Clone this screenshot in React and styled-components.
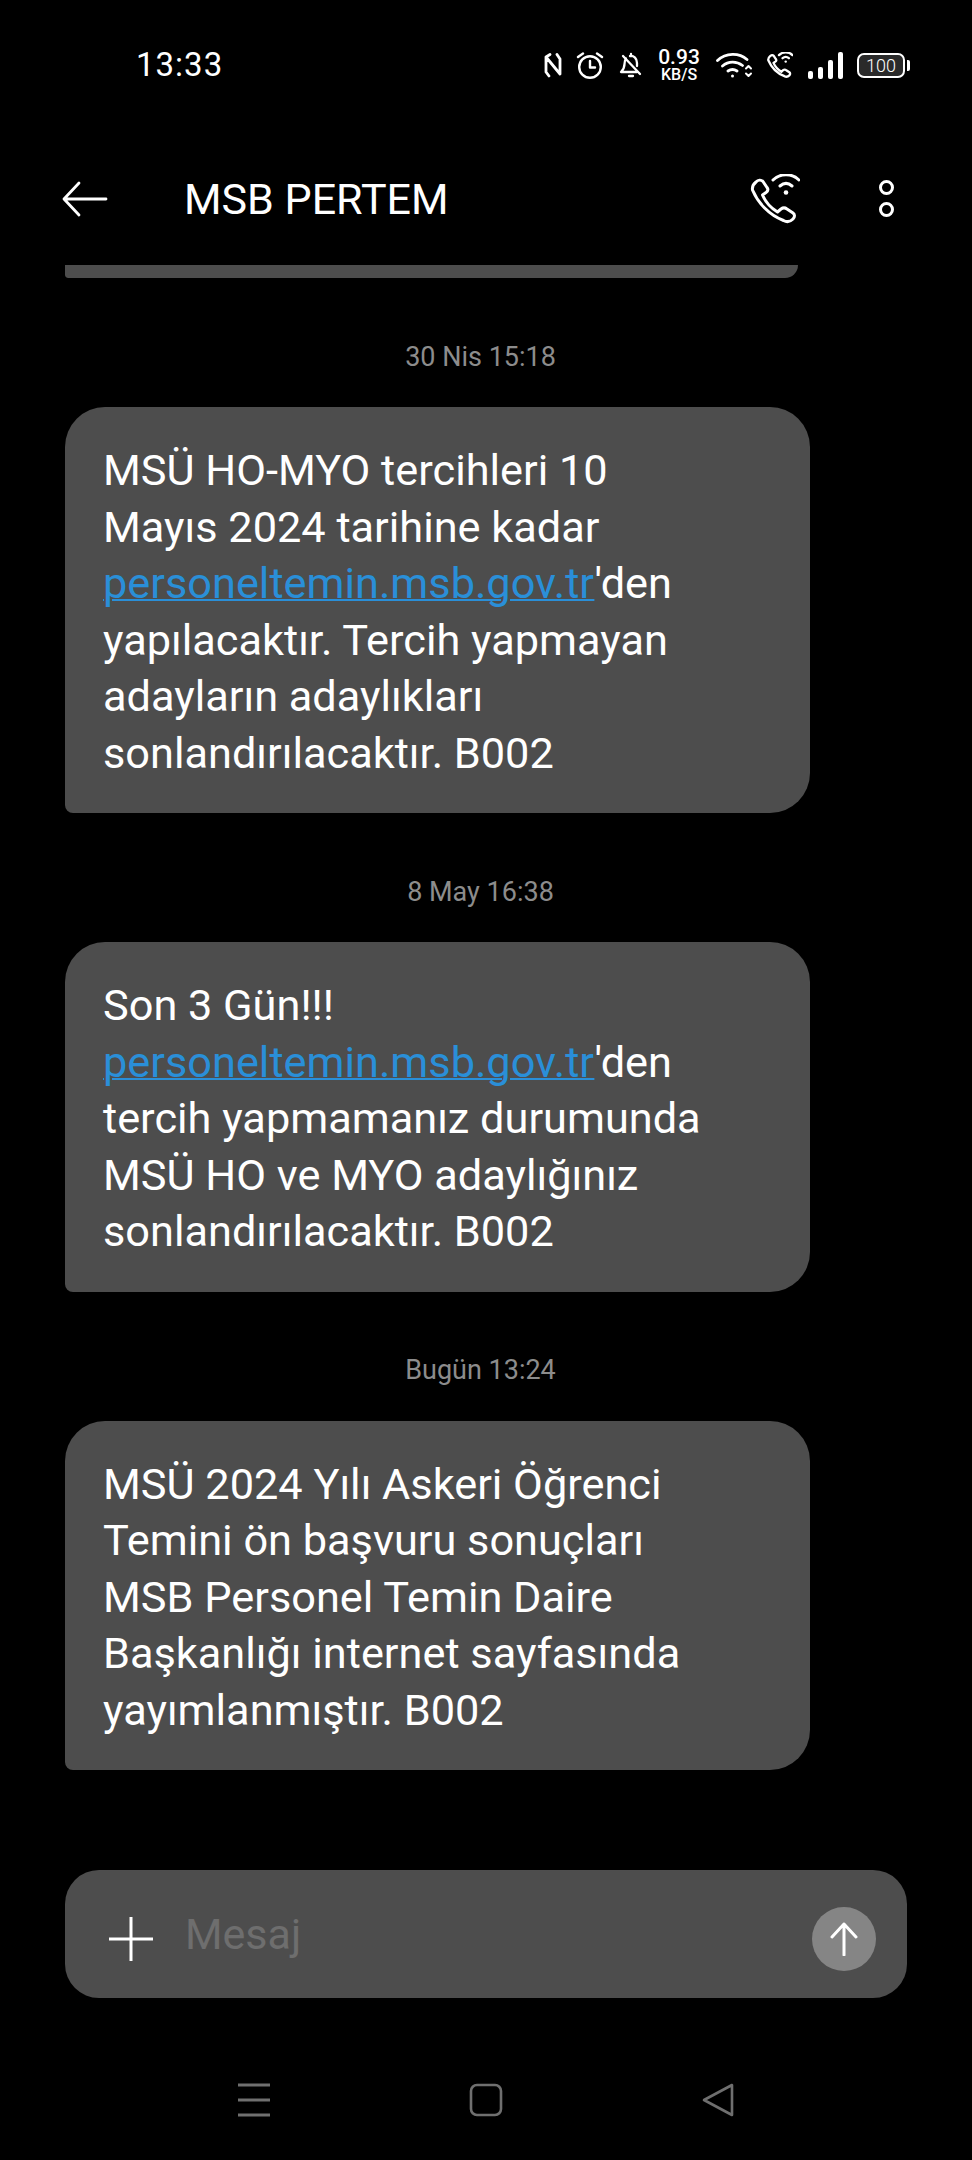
import styled, { createGlobalStyle } from "styled-components";

export default function App() {
    return (
        <>
            <GlobalStyle />
            <Screen>
                <StatusBar>
                    <Clock>13:33</Clock>
                    <StatusIcons>
                        <svg width="18" height="25" viewBox="0 0 18 25" fill="none" stroke="#fff" strokeWidth="2.8" strokeLinecap="round" strokeLinejoin="round">
                            <path d="M6 1.5 2 4v15l3 4M2 4l14 17M16 21V6l-3-4.500" />
                        </svg>
                        <svg width="28" height="27" viewBox="0 0 28 27" fill="none" stroke="#fff" strokeWidth="2.4" strokeLinecap="round" strokeLinejoin="round">
                            <circle cx="14" cy="15" r="10.8" />
                            <path d="M14 9v6.5h5M2 5l5-3.5M26 5l-5-3.5" />
                        </svg>
                        <svg width="24" height="27" viewBox="0 0 24 27" fill="none" stroke="#fff" strokeWidth="2.3" strokeLinecap="round" strokeLinejoin="round">
                            <path d="M12 2v2M7 6.5C5.8 8 5.500 10 5.500 12c0 4-1.500 6-3.500 8h16M11 4c4-.5 7 2.500 7 7v3M4 4l17 18M10 24h4" />
                        </svg>
                        <NetSpeed>
                            <SpeedValue>0.93</SpeedValue>
                            <SpeedUnit>KB/S</SpeedUnit>
                        </NetSpeed>
                        <svg width="37" height="26" viewBox="0 0 37 26" fill="none" stroke="#fff" strokeWidth="2.8" strokeLinecap="round" strokeLinejoin="round">
                            <path d="M1.5 8.5C10 .5 23 .5 31 7.5M6.5 14c6-5 14-5 20-.5M12 19c3-2 6-2 9 0" />
                            <circle cx="16.5" cy="24" r="1.5" fill="#fff" stroke="none" />
                            <path d="M30 16.500l2.500-2.500 2.500 2.500M30 21.500l2.500 2.500 2.500-2.500" strokeWidth="2" />
                        </svg>
                        <WifiCallIcon size={26} stroke={2.3} />
                        <SignalBars>
                            <SignalBar $height={8} />
                            <SignalBar $height={12} />
                            <SignalBar $height={19} />
                            <SignalBar $height={27} />
                        </SignalBars>
                        <Battery>
                            <BatteryBody>100</BatteryBody>
                            <BatteryCap />
                        </Battery>
                    </StatusIcons>
                </StatusBar>

                <Header>
                    <svg width="46" height="36" viewBox="0 0 46 36" fill="none" stroke="#fff" strokeWidth="2.8" strokeLinecap="round" strokeLinejoin="round">
                        <path d="M17 2 2 18l15 16M2 18h42" />
                    </svg>
                    <Title>MSB PERTEM</Title>
                    <HeaderActions>
                        <WifiCallIcon size={50} stroke={3} />
                        <MoreDots>
                            <Dot />
                            <Dot />
                        </MoreDots>
                    </HeaderActions>
                </Header>

                <Thread>
                    <ClippedBubble />
                    {messages.map((message) => (
                        <MessageGroup key={message.date}>
                            <DateLabel>{message.date}</DateLabel>
                            <Bubble>
                                {message.lines.map((line, i) => (
                                    <BubbleLine key={i}>{line}</BubbleLine>
                                ))}
                            </Bubble>
                        </MessageGroup>
                    ))}
                </Thread>

                <Composer>
                    <svg width="44" height="44" viewBox="0 0 44 44" fill="none" stroke="#fff" strokeWidth="3">
                        <path d="M22 0v44M0 22h44" />
                    </svg>
                    <Placeholder>Mesaj</Placeholder>
                    <SendButton>
                        <svg width="30" height="34" viewBox="0 0 30 34" fill="none" stroke="#fff" strokeWidth="3" strokeLinecap="round" strokeLinejoin="round">
                            <path d="M15 2v31M3 15 15 2l12 13" />
                        </svg>
                    </SendButton>
                </Composer>

                <NavBar>
                    <svg width="34" height="34" viewBox="0 0 34 34" fill="none" stroke="#6f6f6f" strokeWidth="3">
                        <path d="M1 2h32M1 17h32M1 32h32" />
                    </svg>
                    <svg width="34" height="34" viewBox="0 0 34 34" fill="none" stroke="#6f6f6f" strokeWidth="2.6">
                        <rect x="2" y="2" width="30" height="30" rx="6" />
                    </svg>
                    <svg width="34" height="34" viewBox="0 0 34 34" fill="none" stroke="#6f6f6f" strokeWidth="2.6" strokeLinejoin="round">
                        <path d="M31 2v30L3 17z" />
                    </svg>
                </NavBar>
            </Screen>
        </>
    );
}

function WifiCallIcon({ size, stroke }) {
    return (
        <svg width={size} height={size} viewBox="0 0 50 50" fill="none" stroke="#fff" strokeWidth={stroke * 50 / size} strokeLinecap="round" strokeLinejoin="round">
            <path d="M6 8c2-2 5-2.500 7-.5l4 6c1.500 2 1 3.500-1 5l-3.500 2.500c3 7 8.500 13 15 17l3.500-3c2-1.500 4-1.500 6 0l6 4c2 1.500 2 4 0 6-2.500 2.500-6 3.500-9.500 1.500C19 41 8 29 2.500 16 2 13 3.500 10 6 8z" />
            <path d="M23 6c7-7 19-7 26 0M30 12c4-3.500 8-3.500 12 0" />
            <circle cx="36" cy="18.5" r="2.3" fill="#fff" stroke="none" />
        </svg>
    );
}

const GlobalStyle = createGlobalStyle`
    html, body {
        margin: 0;
        padding: 0;
        background-color: #000000;
    }
    * {
        box-sizing: border-box;
    }
`
const Screen = styled.div`
    width: 972px;
    height: 2160px;
    background-color: #000000;
    color: #ffffff;
    font-family: Roboto, "Liberation Sans", sans-serif;
    display: flex;
    flex-direction: column;
    overflow: hidden;
`
const StatusBar = styled.div`
    height: 130px;
    flex-shrink: 0;
    display: flex;
    align-items: flex-start;
    justify-content: space-between;
    padding: 48px 62px 0 136px;
`
const Clock = styled.span`
    font-size: 33px;
    line-height: 34px;
    letter-spacing: 1px;
`
const StatusIcons = styled.div`
    display: flex;
    align-items: center;
    gap: 14.5px;
    height: 34px;
`
const NetSpeed = styled.div`
    display: flex;
    flex-direction: column;
    align-items: center;
    width: 44px;
    font-weight: 500;
`
const SpeedValue = styled.span`
    font-size: 21px;
    line-height: 19px;
`
const SpeedUnit = styled.span`
    font-size: 16px;
    line-height: 15px;
`
const SignalBars = styled.div`
    display: flex;
    align-items: flex-end;
    gap: 5px;
    height: 27px;
`
const SignalBar = styled.span`
    width: 5px;
    height: ${(props) => props.$height}px;
    background-color: #ffffff;
    border-radius: 2px;
`
const Battery = styled.div`
    display: flex;
    align-items: center;
    gap: 2px;
`
const BatteryBody = styled.div`
    width: 48px;
    height: 25px;
    border: 2px solid #ffffff;
    border-radius: 7px;
    background-color: #2a2a2a;
    display: flex;
    align-items: center;
    justify-content: center;
    font-size: 18px;
    font-weight: 300;
`
const BatteryCap = styled.span`
    width: 3px;
    height: 11px;
    background-color: #ffffff;
    border-radius: 0 2px 2px 0;
`
const Header = styled.div`
    height: 135px;
    flex-shrink: 0;
    display: flex;
    align-items: center;
    padding: 2px 78px 0 62px;
`
const Title = styled.h1`
    margin: 0 0 0 76px;
    font-size: 43px;
    font-weight: 400;
`
const HeaderActions = styled.div`
    margin-left: auto;
    display: flex;
    align-items: center;
    gap: 79px;
`
const MoreDots = styled.div`
    display: flex;
    flex-direction: column;
    gap: 7px;
`
const Dot = styled.span`
    width: 15px;
    height: 15px;
    border: 3px solid #ffffff;
    border-radius: 50%;
`
const Thread = styled.div`
    flex: 1;
    padding: 0 76px 0 65px;
    display: flex;
    flex-direction: column;
    overflow: hidden;
`
const ClippedBubble = styled.div`
    flex-shrink: 0;
    height: 13px;
    width: 733px;
    background-color: #4d4d4d;
    border-radius: 0 0 30px 8px;
`
const MessageGroup = styled.div`
    display: flex;
    flex-direction: column;
    flex-shrink: 0;
`
const DateLabel = styled.div`
    height: 129px;
    padding-top: 28px;
    display: flex;
    align-items: center;
    justify-content: center;
    font-size: 27px;
    color: #8c8c8c;
`
const Bubble = styled.div`
    width: 745px;
    padding: 36px 38px 31px;
    background-color: #4d4d4d;
    border-radius: 40px 40px 40px 8px;
    font-size: 43.3px;
    line-height: 56.5px;
`
const BubbleLine = styled.div`
    white-space: nowrap;
`
const SmsLink = styled.span`
    color: #2a8fd8;
    text-decoration: underline;
    text-decoration-thickness: 2px;
`
const Composer = styled.div`
    height: 128px;
    flex-shrink: 0;
    margin: 0 65px;
    padding: 9px 31px 0 44px;
    display: flex;
    align-items: center;
    background-color: #4d4d4d;
    border-radius: 34px;
`
const Placeholder = styled.span`
    margin: 0 0 9px 32px;
    font-size: 43px;
    color: #6e6e6e;
`
const SendButton = styled.div`
    width: 64px;
    height: 64px;
    margin-left: auto;
    border-radius: 50%;
    background-color: #858585;
    display: flex;
    align-items: center;
    justify-content: center;
`
const NavBar = styled.div`
    height: 162px;
    flex-shrink: 0;
    padding-top: 42px;
    display: flex;
    align-items: center;
    justify-content: center;
    gap: 198px;
`

const messages = [
    {
        date: "30 Nis 15:18",
        lines: [
            "MSÜ HO-MYO tercihleri 10",
            "Mayıs 2024 tarihine kadar",
            <><SmsLink>personeltemin.msb.gov.tr</SmsLink>'den</>,
            "yapılacaktır. Tercih yapmayan",
            "adayların adaylıkları",
            "sonlandırılacaktır. B002",
        ],
    },
    {
        date: "8 May 16:38",
        lines: [
            "Son 3 Gün!!!",
            <><SmsLink>personeltemin.msb.gov.tr</SmsLink>'den</>,
            "tercih yapmamanız durumunda",
            "MSÜ HO ve MYO adaylığınız",
            "sonlandırılacaktır. B002",
        ],
    },
    {
        date: "Bugün 13:24",
        lines: [
            "MSÜ 2024 Yılı Askeri Öğrenci",
            "Temini ön başvuru sonuçları",
            "MSB Personel Temin Daire",
            "Başkanlığı internet sayfasında",
            "yayımlanmıştır. B002",
        ],
    },
];
